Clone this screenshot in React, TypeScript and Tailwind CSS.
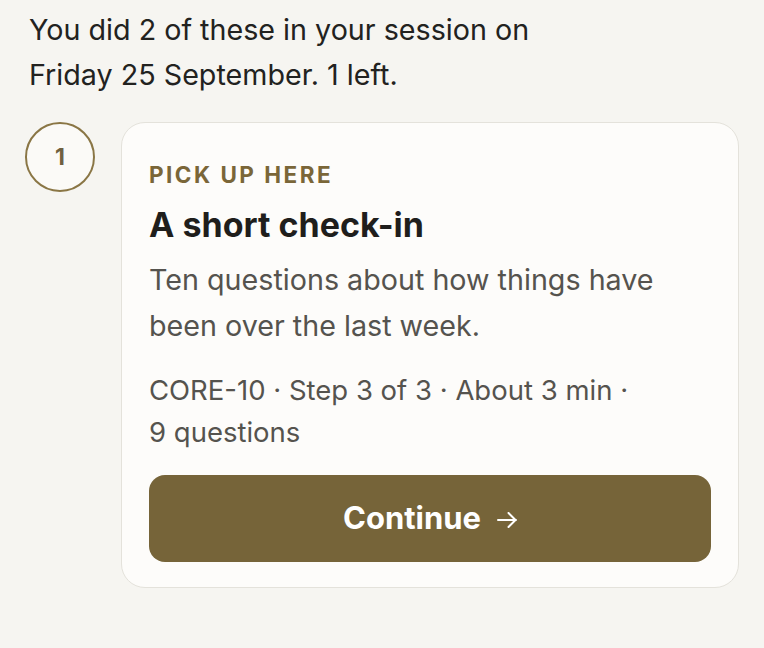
import React from "react";

export default function App() {
  return (
    <div className="min-h-[648px] w-[764px] bg-[#f6f5f1] pl-[29px] pr-[25px] pt-[7px]" style={{ fontFamily: "Inter, 'Noto Sans', sans-serif" }}>
      <p className="text-[28.7px] leading-[45px] text-[#222220]">
        You did 2 of these in your session on
        <br />
        Friday 25 September. 1 left.
      </p>
      <div className="mt-[25px] flex items-start gap-[26px] -ml-[4px]">
        <div className="flex h-[70px] w-[70px] shrink-0 items-center justify-center rounded-full border-2 border-[#8a7645] bg-[#fbfaf7] text-[23px] font-bold text-[#6f6040]">
          1
        </div>
        <div className="min-w-0 flex-1 rounded-[24px] border border-[#e4e2db] bg-[#fdfcfa] px-[27px] pt-[37px] pb-[25px]">
          <div className="text-[22.5px] font-bold leading-[30px] tracking-[0.11em] text-[#7a6638]">PICK UP HERE</div>
          <h2 className="mt-[13px] text-[34px] font-bold leading-[44px] text-[#1f1e1c]">A short check-in</h2>
          <p className="mt-[10px] text-[28.7px] leading-[46px] text-[#55534e]">
            Ten questions about how things have
            <br />
            been over the last week.
          </p>
          <p className="mt-[20px] text-[27.5px] leading-[42px] text-[#55534e]">
            CORE-10 · Step 3 of 3 · About 3 min ·
            <br />
            9 questions
          </p>
          <button className="mt-[22px] flex h-[87px] w-full items-center justify-center gap-[16px] rounded-[16px] bg-[#766439] text-[31px] font-bold text-white">
            Continue
            <svg width="20" height="16" viewBox="0 0 20 16" fill="none" stroke="currentColor" strokeWidth="2" strokeLinecap="round" strokeLinejoin="round" className="mt-[2px]">
              <path d="M1 8h18M11.5 1l7 7-7 7" />
            </svg>
          </button>
        </div>
      </div>
    </div>
  );
}
